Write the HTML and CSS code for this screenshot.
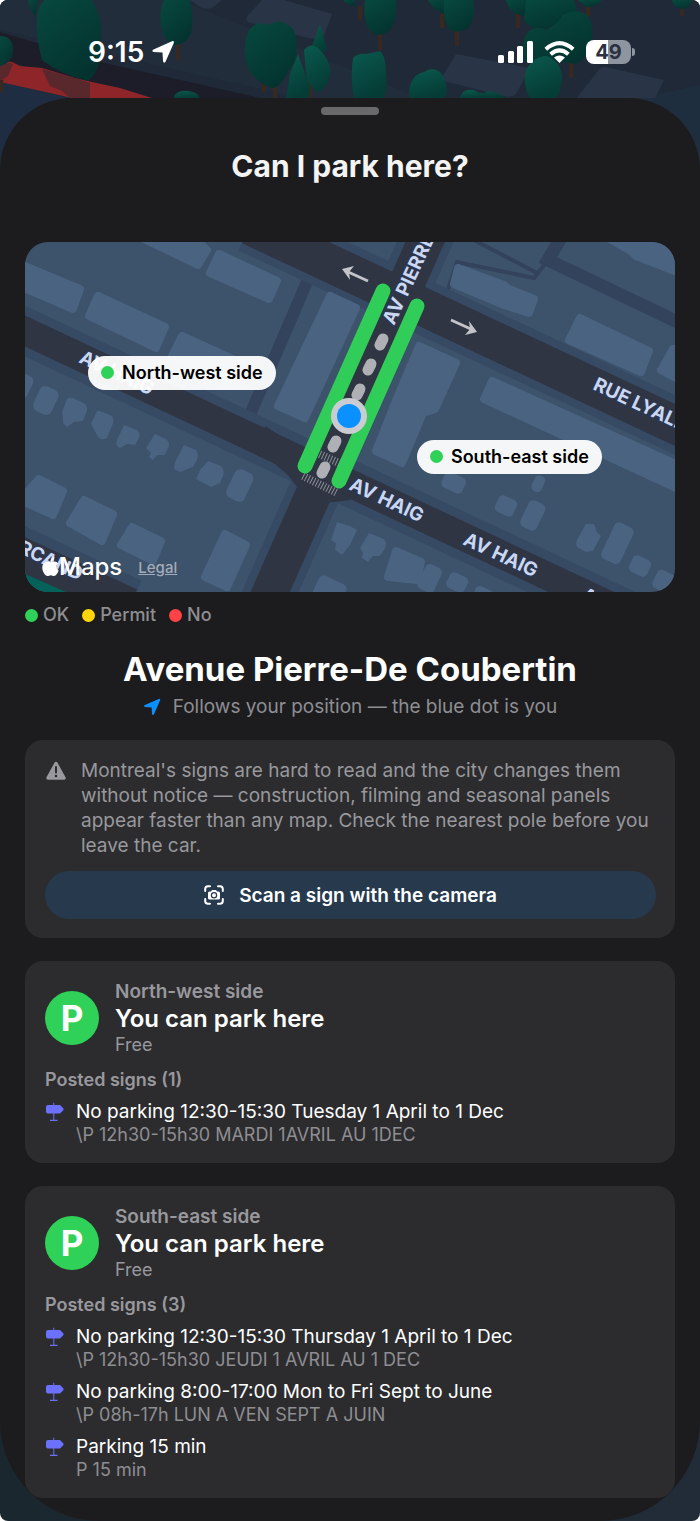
FILE: index.html
```html
<!DOCTYPE html>
<html lang="en">
<head>
    <meta charset="UTF-8">
    <meta name="viewport" content="width=device-width, initial-scale=1.0">
    <title>Can I park here?</title>
    <link rel="stylesheet" href="styles.css">
</head>
<body>

    <div class="screen">
        <!-- 3D city behind the sheet -->
        <svg class="scene" viewBox="0 0 700 180" preserveAspectRatio="xMidYMin slice" aria-hidden="true">
            <defs>
                <linearGradient id="leaf" x1="0" y1="0" x2="0.6" y2="1">
                    <stop offset="0" stop-color="#07493f"/>
                    <stop offset="1" stop-color="#04332f"/>
                </linearGradient>
                <linearGradient id="leafLight" x1="0" y1="0" x2="0.4" y2="1">
                    <stop offset="0" stop-color="#0a5a4d"/>
                    <stop offset="1" stop-color="#053c36"/>
                </linearGradient>
            </defs>
            <rect width="700" height="180" fill="#1f2937"/>
            <path d="M0 0H180L420 98H300L0 30Z" fill="#222d3b"/>
            <path d="M0 32L100 62L260 98H150L0 60Z" fill="#1c1d29"/>
            <path d="M0 82L70 98H60V180H0Z" fill="#1e2d42"/>
            <path d="M640 98L700 85V180H640Z" fill="#1f2e3e"/>
            <g fill="#293547">
                <path d="M262 0H284L332 14L324 36Q318 40 308 38L248 22Q244 18 250 13Z"/>
                <path d="M456 54L530 68L516 94Q512 98 504 96L440 80Z"/>
                <path d="M600 68Q604 66 610 68L664 80L655 98H577Z"/>
                <path d="M190 0H222L212 8Q206 10 200 7Z"/>
            </g>
            <path d="M0 60L12 62L20 66L42 68L75 78L92 82L120 88L152 98H72L50 93L0 82Z" fill="#8e2528"/>
            <path d="M0 60L13 64L8 76L0 81ZM42 69L75 78L90 83L90 98H70L62 91L50 86Z" fill="#58282d"/>
            <path d="M178 44V60M264 84V92M275 84V98M310 84V98M1 80V92M360 6V20M380 34V50M442 14V28M457 30V46M518 14V28M571 62V78M588 4V16M682 8V16" stroke="#38281f" stroke-width="4"/>
            <g fill="url(#leaf)">
                <path d="M38 10Q42 0 50 -4H88Q103 12 101 40Q103 68 88 81Q60 74 42 60Q34 30 38 10Z"/>
                <path d="M28 0H38L35 16Q29 10 28 0Z"/>
                <path d="M0 36Q13 36 13 50Q13 62 0 66Z"/>
                <path d="M164 0H190Q194 18 191 34Q184 46 174 45Q164 42 161 26Q159 10 164 0Z"/>
                <path d="M249 30Q256 20 268 25Q280 18 288 25Q298 30 296 46Q298 60 288 72Q280 88 272 88Q262 86 250 72Q240 52 249 30Z"/>
                <path d="M343 0H355V6Q348 6 343 0Z"/>
                <path d="M365 0H396Q398 20 390 30Q380 38 372 33Q362 22 365 0Z"/>
                <path d="M428 0H446V14Q434 12 428 0Z"/>
                <path d="M444 0H473Q476 18 468 28Q458 34 450 30Q442 20 444 0Z"/>
                <path d="M506 0H526V16Q510 16 506 0Z"/>
                <path d="M526 0H574L578 12Q562 28 548 28Q532 32 524 20Z"/>
                <path d="M578 0H602Q596 8 586 7Z"/>
                <path d="M672 0H692Q690 9 682 9Q674 8 672 0Z"/>
                <path d="M522 62Q520 40 530 30Q540 26 546 30Q558 24 562 16Q574 8 586 14Q594 22 592 40Q590 56 576 64Q550 60 522 62Z"/>
            </g>
            <g fill="url(#leafLight)">
                <path d="M174 96Q178 90 188 91Q198 92 200 98H174Z"/>
                <path d="M320 24L326 45Q330 50 322 52L312 46Z"/>
                <path d="M353 58Q358 53 366 54L380 51Q386 56 386 72Q388 88 384 98H354Q350 78 353 58Z"/>
                <path d="M409 90Q412 74 424 72Q432 66 440 72Q448 82 447 94L444 98H410Z"/>
                <path d="M460 98Q462 88 474 90Q480 94 484 93Q492 88 506 98Z"/>
                <path d="M526 70Q534 56 546 56Q560 60 562 76Q562 92 556 98H530Q522 86 526 70Z"/>
                <path d="M298 54L310 88L309 98H286L290 74Z"/>
                <path d="M304 50Q310 42 318 48Q328 56 331 72Q326 90 318 92Q306 84 306 72Z"/>
            </g>
        </svg>

        <header class="status-bar">
            <div class="status-left">
                <span class="clock">9:15</span>
                <svg width="24" height="24" viewBox="0 0 24 24" aria-hidden="true"><path d="M21 1.200Q23.600 .4 22.800 3L14.600 21.500Q13 24 12 21.200L11.500 12.600L2.800 12Q0 11 2.500 9.400Z" fill="#fff"/></svg>
            </div>
            <div class="status-right">
                <svg width="35" height="23" viewBox="0 0 35 23" fill="#fff" aria-hidden="true">
                    <rect x="0" y="14" width="6" height="8" rx="1.500"/>
                    <rect x="10" y="10" width="6" height="12" rx="1.500"/>
                    <rect x="19" y="5" width="6" height="17" rx="1.500"/>
                    <rect x="29" y="0" width="6" height="22" rx="1.500"/>
                </svg>
                <svg width="31" height="23" viewBox="0 0 31 23" aria-hidden="true">
                    <path d="M1.800 8.200Q15.500 -4 29.200 8.200M6.600 13.300Q15.500 5.600 24.400 13.300" fill="none" stroke="#fff" stroke-width="4"/>
                    <path d="M10 16.500Q15.500 12.500 21 16.500L15.500 22Z" fill="#fff"/>
                </svg>
                <div class="battery"><span class="battery-level">49</span></div>
            </div>
        </header>

        <main class="sheet">
            <div class="grabber"></div>
            <h1>Can I park here?</h1>

            <div class="map">
                <svg class="map-art" viewBox="25 242 650 350" preserveAspectRatio="xMidYMid slice" role="img" aria-label="Map of Avenue Pierre-De Coubertin">
                    <rect x="25" y="242" width="650" height="350" fill="#3d526b"/>

                    <!-- alleys -->
                    <g fill="none" stroke="#33435c">
                        <path d="M312 270L250 415" stroke-width="12"/>
                        <path d="M562 236L548 260L690 328" stroke-width="13"/>
                        <path d="M446 296L457 262L534 278L548 260M470 238L537 273" stroke-width="4"/>
                    </g>

                    <!-- kerbs -->
                    <g fill="none" stroke="#364a64">
                        <path d="M10 324L690 643" stroke-width="46"/>
                        <path d="M250 226L690 432" stroke-width="54"/>
                        <path d="M434 222L256 624" stroke-width="52"/>
                        <path d="M10 549L130 605" stroke-width="54"/>
                    </g>

                    <!-- roads -->
                    <g fill="none" stroke="#2f3542">
                        <path d="M10 324L690 643" stroke-width="28"/>
                        <path d="M250 226L690 432" stroke-width="38"/>
                        <path d="M434 222L256 624" stroke-width="36"/>
                        <path d="M10 549L130 605" stroke-width="34"/>
                    </g>
                    <path d="M265 426L305 452L345 462L350 500L310 505L288 475L258 450Z" fill="#2f3542"/>
                    <path d="M25 574L66 592H25Z" fill="#03625a"/>

                    <!-- buildings -->
                    <g fill="#496380" stroke="#496380" stroke-width="8" stroke-linejoin="round">
                        <path d="M15 262L80 289L73 309L15 284Z"/>
                        <path d="M142 238L185 228L207 250L198 265Z"/>
                        <path d="M219 254L277 281L269 299L210 273Z"/>
                        <path d="M98 296L165 327L156 348L89 316Z"/>
                        <path d="M182 336L241 363L232 382L172 356Z"/>
                        <path d="M330 296L356 308L305 418L278 406Z"/>
                        <path d="M419 346L456 363L435 409L423 413L402 463L376 451L397 398Z"/>
                        <path d="M458 268L504 285L509 289L534 299L529 313L504 305L454 284Z"/>
                        <path d="M580 318L649 351L641 372L569 340Z"/>
                        <path d="M673 349L661 370L680 380V349Z"/>
                        <path d="M608 238L631 251L636 256L685 275V238Z"/>
                        <path d="M492 381L680 466V490L484 399Z"/>
                        <path d="M39 479L63 491L53 515L20 500Z"/>
                        <path d="M84 500L113 514L102 541L70 523Z"/>
                        <path d="M132 527L161 541L153 561L121 545Z"/>
                        <path d="M225 534L246 545L227 587L205 577Z"/>
                        <path d="M396 551L421 562L417 580L388 577Z"/>
                    </g>
                    <g fill="#496380">
                        <rect x="15" y="374" width="16" height="24" rx="6" transform="rotate(25 23 386)"/>
                        <rect x="36" y="387" width="20" height="27" rx="6" transform="rotate(25 46 400)"/>
                        <path d="M67 399Q70 396 75 399L85 404Q89 408 86 413L83 421L74 422L67 427L63 423V416L62 412Z"/>
                        <path d="M97 411Q102 411 112 416Q115 420 112 426L107 438Q102 441 98 437L91 424Z"/>
                        <path d="M124 425L137 430Q141 434 139 438L135 445L127 444L120 448Q115 446 117 440Z"/>
                        <path d="M155 434L166 439Q171 443 168 448L165 455L157 455L153 460L149 457L151 453L146 448Z"/>
                        <path d="M184 445L196 450Q199 455 197 460L193 467L180 472L174 469L175 462Z"/>
                        <path d="M208 461L221 466Q225 470 223 476L220 483L211 487L196 479L200 470Z"/>
                        <rect x="230" y="470" width="20" height="31" rx="6" transform="rotate(25 240 485)"/>
                        <rect x="442" y="474" width="23" height="17" rx="5" transform="rotate(25 453 483)"/>
                        <rect x="533" y="475" width="11" height="17" rx="5" transform="rotate(25 538 483)"/>
                        <rect x="496" y="497" width="20" height="18" rx="5" transform="rotate(25 506 506)"/>
                        <rect x="524" y="501" width="18" height="29" rx="5" transform="rotate(25 533 515)"/>
                        <path d="M586 524L594 524L597 532L601 536L593 551L586 552L577 547Q575 543 578 538Z"/>
                        <rect x="607" y="523" width="21" height="40" rx="5" transform="rotate(25 617 543)"/>
                        <rect x="630" y="557" width="20" height="18" rx="5" transform="rotate(25 640 566)"/>
                        <rect x="654" y="571" width="20" height="20" rx="5" transform="rotate(25 663 581)"/>
                        <path d="M337 522L350 526L357 530L350 545L342 555L335 550L336 543L331 540Z"/>
                        <path d="M369 533L384 539Q388 544 384 550L380 556L373 556L368 562L362 558L363 553L360 548Z"/>
                        <rect x="421" y="565" width="18" height="27" rx="5" transform="rotate(25 430 578)"/>
                        <rect x="447" y="574" width="20" height="17" rx="5" transform="rotate(25 457 583)"/>
                        <rect x="474" y="588" width="20" height="14" rx="5" transform="rotate(25 484 594)"/>
                        <rect x="315" y="579" width="30" height="24" rx="5" transform="rotate(25 330 590)"/>
                    </g>

                    <!-- crosswalks and one-way arrows -->
                    <g fill="none" stroke="#8c9099" stroke-width="8" stroke-dasharray="1 2">
                        <path d="M317 453L341 464"/>
                        <path d="M303 476L337 493"/>
                    </g>
                    <path d="M368 281L346 271M451 320L473 330" fill="none" stroke="#c2c4ca" stroke-width="3"/>
                    <path d="M342 269L354 266L349 272L350 280ZM477 332L465 335L470 329L469 321Z" fill="#c2c4ca"/>

                    <g class="road-label">
                        <text transform="translate(394 326) rotate(-65)">AV PIERRE</text>
                        <text transform="translate(592 389) rotate(25)">RUE LYALL</text>
                        <text transform="translate(348 489) rotate(25)">AV HAIG</text>
                        <text transform="translate(462 544) rotate(25)">AV HAIG</text>
                        <text transform="translate(580 599) rotate(25)">AV HAIG</text>
                        <text transform="translate(78 362) rotate(25)">AV HAIG</text>
                        <text transform="translate(17 552) rotate(25)">RCAND</text>
                    </g>

                    <!-- lane marks -->
                    <g stroke="#aeb0b5" stroke-width="11" stroke-linecap="round">
                        <path d="M383 339L380 345M371 364L368 370M360 389L357 395M336 441L333 447M325 467L322 473"/>
                    </g>

                    <!-- both sides of the street -->
                    <g stroke="#30cd58" stroke-width="15" stroke-linecap="round">
                        <path d="M383 291L305 466"/>
                        <path d="M417 306L339 481"/>
                    </g>

                    <circle cx="349" cy="416" r="18" fill="#cbccd1"/>
                    <circle cx="349" cy="416" r="12" fill="#0a91ff"/>
                </svg>

                <span class="pill pill-nw"><i class="dot ok"></i>North-west side</span>
                <span class="pill pill-se"><i class="dot ok"></i>South-east side</span>

                <div class="map-credit">
                    <span class="maps-logo">
                        <svg width="17" height="20" viewBox="0 0 17 20" fill="#fff" aria-hidden="true">
                            <path d="M8.600 5.600C9.700 5.600 10.800 4.600 12.700 4.600C14 4.600 15.300 5.300 16.100 6.400C13.400 8.200 13.700 12.300 16.700 13.500C15.900 15.800 14 19 12.100 19C10.800 19 10.300 18.200 8.800 18.200C7.300 18.200 6.700 19 5.500 19C3.200 19 .3 14.500 .3 10.700C.3 6.900 2.600 4.700 5 4.700C6.500 4.700 7.700 5.600 8.600 5.600ZM8.500 4.600C8.300 2.300 10.200 .3 12.200 0C12.500 2.500 10.400 4.600 8.500 4.600Z"/>
                        </svg>Maps
                    </span>
                    <a class="legal" href="#">Legal</a>
                </div>
            </div>

            <div class="legend">
                <span><i class="dot ok"></i>OK</span>
                <span><i class="dot permit"></i>Permit</span>
                <span><i class="dot no"></i>No</span>
            </div>

            <h2>Avenue Pierre-De Coubertin</h2>
            <p class="follows">
                <svg width="18" height="18" viewBox="0 0 24 24" aria-hidden="true"><path d="M21 1.200Q23.600 .4 22.800 3L14.600 21.500Q13 24 12 21.200L11.500 12.600L2.800 12Q0 11 2.500 9.400Z" fill="#0a91ff"/></svg>
                Follows your position — the blue dot is you
            </p>

            <section class="card">
                <div class="warning">
                    <svg width="22" height="20" viewBox="0 0 22 20" aria-hidden="true">
                        <path d="M11 2.500L19 17H3Z" fill="#98989d" stroke="#98989d" stroke-width="3.500" stroke-linejoin="round"/>
                        <path d="M11 6V11.500" stroke="#2c2c2e" stroke-width="2" stroke-linecap="round"/>
                        <circle cx="11" cy="15" r="1.300" fill="#2c2c2e"/>
                    </svg>
                    <p>Montreal's signs are hard to read and the city changes them without notice — construction, filming and seasonal panels appear faster than any map. Check the nearest pole before you leave the car.</p>
                </div>
                <button class="scan-btn" type="button">
                    <svg width="20" height="20" viewBox="0 0 20 20" aria-hidden="true">
                        <path d="M1.200 6V4Q1.200 1.200 4 1.200H6M14 1.200H16Q18.800 1.200 18.800 4V6M18.800 14V16Q18.800 18.800 16 18.800H14M6 18.800H4Q1.200 18.800 1.200 16V14" fill="none" stroke="#fff" stroke-width="2" stroke-linecap="round"/>
                        <path d="M5.500 6.500H7L8 5H12L13 6.500H14.500Q16 6.500 16 8V13Q16 14.500 14.500 14.500H5.500Q4 14.500 4 13V8Q4 6.500 5.500 6.500Z" fill="#fff"/>
                        <circle cx="10" cy="10.300" r="2.600" fill="#fff" stroke="#26394d" stroke-width="1.200"/>
                    </svg>
                    Scan a sign with the camera
                </button>
            </section>

            <section class="card">
                <div class="side">
                    <div class="badge">P</div>
                    <div>
                        <div class="side-name">North-west side</div>
                        <h3>You can park here</h3>
                        <div class="price">Free</div>
                    </div>
                </div>
                <h4>Posted signs (1)</h4>
                <ul class="signs">
                    <li>
                        <svg width="20" height="20" viewBox="0 0 20 20" fill="#6c71fb" aria-hidden="true"><path d="M8.300 1Q8.800 0 9.300 1V3H15L18.500 6.500V8L15 11.500H9.300V17.800H12.500V19H5V17.800H8.300V11.500H3Q1 11.500 1 9.500V5Q1 3 3 3H8.300Z"/></svg>
                        <div>
                            <div class="sign-text">No parking 12:30-15:30 Tuesday 1 April to 1 Dec</div>
                            <div class="sign-raw">\P 12h30-15h30 MARDI 1AVRIL AU 1DEC</div>
                        </div>
                    </li>
                </ul>
            </section>

            <section class="card">
                <div class="side">
                    <div class="badge">P</div>
                    <div>
                        <div class="side-name">South-east side</div>
                        <h3>You can park here</h3>
                        <div class="price">Free</div>
                    </div>
                </div>
                <h4>Posted signs (3)</h4>
                <ul class="signs">
                    <li>
                        <svg width="20" height="20" viewBox="0 0 20 20" fill="#6c71fb" aria-hidden="true"><path d="M8.300 1Q8.800 0 9.300 1V3H15L18.500 6.500V8L15 11.500H9.300V17.800H12.500V19H5V17.800H8.300V11.500H3Q1 11.500 1 9.500V5Q1 3 3 3H8.300Z"/></svg>
                        <div>
                            <div class="sign-text">No parking 12:30-15:30 Thursday 1 April to 1 Dec</div>
                            <div class="sign-raw">\P 12h30-15h30 JEUDI 1 AVRIL AU 1 DEC</div>
                        </div>
                    </li>
                    <li>
                        <svg width="20" height="20" viewBox="0 0 20 20" fill="#6c71fb" aria-hidden="true"><path d="M8.300 1Q8.800 0 9.300 1V3H15L18.500 6.500V8L15 11.500H9.300V17.800H12.500V19H5V17.800H8.300V11.500H3Q1 11.500 1 9.500V5Q1 3 3 3H8.300Z"/></svg>
                        <div>
                            <div class="sign-text">No parking 8:00-17:00 Mon to Fri Sept to June</div>
                            <div class="sign-raw">\P 08h-17h LUN A VEN SEPT A JUIN</div>
                        </div>
                    </li>
                    <li>
                        <svg width="20" height="20" viewBox="0 0 20 20" fill="#6c71fb" aria-hidden="true"><path d="M8.300 1Q8.800 0 9.300 1V3H15L18.500 6.500V8L15 11.500H9.300V17.800H12.500V19H5V17.800H8.300V11.500H3Q1 11.500 1 9.500V5Q1 3 3 3H8.300Z"/></svg>
                        <div>
                            <div class="sign-text">Parking 15 min</div>
                            <div class="sign-raw">P 15 min</div>
                        </div>
                    </li>
                </ul>
            </section>
        </main>
    </div>

</body>
</html>
```
FILE: styles.css
```css
* {
    box-sizing: border-box;
}

body {
    font-family: Inter, "Liberation Sans", sans-serif;
    background-color: #fff;
    color: #fff;
    margin: 0;
}

h1, h2, h3, h4, p, ul {
    margin: 0;
    padding: 0;
}

svg {
    display: block;
    flex-shrink: 0;
}

.screen {
    position: relative;
    overflow: hidden;
    border-radius: 8px;
    background: linear-gradient(90deg, #1a272e, #222c38);
}

.scene {
    position: absolute;
    top: 0;
    left: 0;
    width: 100%;
    height: 180px;
}

/* status bar */
.status-bar {
    position: relative;
    display: flex;
    justify-content: space-between;
    height: 98px;
    padding: 36px 65px 30px 88px;
}

.status-left,
.status-right {
    display: flex;
    align-items: center;
    gap: 7px;
}

.status-right {
    gap: 11px;
}

.clock {
    font-size: 28px;
    font-weight: 600;
}

.battery {
    position: relative;
    width: 45px;
    height: 24px;
    margin-right: 4px;
    border-radius: 8px;
    background: linear-gradient(90deg, #fff 49%, #8f959e 49%);
    color: #2a3240;
    font-size: 20px;
    font-weight: 700;
    line-height: 24px;
    text-align: center;
}

.battery::after {
    content: "";
    position: absolute;
    top: 8px;
    right: -4px;
    width: 3px;
    height: 8px;
    border-radius: 0 3px 3px 0;
    background-color: #8f959e;
}

/* sheet */
.sheet {
    position: relative;
    overflow: hidden;
    padding: 9px 25px 23px;
    border-radius: 72px 72px 100px 100px;
    background-color: #1c1c1e;
}

.grabber {
    width: 58px;
    height: 8px;
    margin: 0 auto;
    border-radius: 4px;
    background-color: #69696c;
}

h1 {
    margin-top: 31px;
    color: #f4f4f5;
    font-size: 30px;
    font-weight: 700;
    line-height: 40px;
    text-align: center;
}

/* map */
.map {
    position: relative;
    overflow: hidden;
    margin-top: 56px;
    border-radius: 23px;
}

.map-art {
    width: 100%;
    aspect-ratio: 650 / 350;
}

.road-label {
    fill: #cbd7f0;
    stroke: #2b3750;
    stroke-width: 3px;
    paint-order: stroke;
    font-size: 19px;
    font-weight: 700;
}

.dot {
    width: 13px;
    height: 13px;
    border-radius: 50%;
}

.ok {
    background-color: #30d158;
}

.permit {
    background-color: #ffd60a;
}

.no {
    background-color: #ff4245;
}

.pill {
    position: absolute;
    display: flex;
    align-items: center;
    gap: 8px;
    height: 34px;
    padding: 0 13px;
    border-radius: 17px;
    background-color: rgba(255, 255, 255, 0.95);
    color: #000;
    font-size: 18px;
    font-weight: 600;
    white-space: nowrap;
}

.pill-nw {
    left: 9.7%;
    top: 32.5%;
}

.pill-se {
    left: 60.3%;
    top: 56.5%;
}

.map-credit {
    position: absolute;
    left: 17px;
    bottom: 11px;
    display: flex;
    align-items: center;
    gap: 16px;
}

.maps-logo {
    display: flex;
    align-items: center;
    font-size: 24px;
    font-weight: 500;
    line-height: 28px;
}

.legal {
    color: #a3acb8;
    font-size: 15px;
    font-weight: 500;
}

.legend {
    display: flex;
    gap: 13px;
    margin-top: 11px;
    color: #8e8e93;
    font-size: 18px;
    font-weight: 500;
    line-height: 24px;
}

.legend span {
    display: flex;
    align-items: center;
    gap: 5px;
}

h2 {
    margin-top: 21px;
    font-size: 33px;
    font-weight: 700;
    line-height: 42px;
    text-align: center;
}

.follows {
    display: flex;
    align-items: center;
    justify-content: center;
    gap: 12px;
    margin-top: 4px;
    color: #8e8e93;
    font-size: 19px;
    line-height: 26px;
}

/* cards */
.card {
    margin-top: 23px;
    padding: 19px 19px 17px 20px;
    border-radius: 18px;
    background-color: #2c2c2e;
}

.follows + .card {
    margin-top: 20px;
    padding: 18px 19px 19px 20px;
}

.warning {
    display: flex;
    gap: 14px;
    color: #98989d;
    font-size: 19px;
    line-height: 25px;
}

.warning svg {
    margin-top: 3px;
}

.scan-btn {
    display: flex;
    align-items: center;
    justify-content: center;
    gap: 15px;
    width: 100%;
    height: 48px;
    margin-top: 13px;
    border: none;
    border-radius: 24px;
    background-color: #26394d;
    color: #fff;
    font-family: inherit;
    font-size: 19px;
    font-weight: 600;
    cursor: pointer;
}

.side {
    display: flex;
    align-items: center;
    gap: 16px;
}

.badge {
    width: 54px;
    height: 54px;
    border-radius: 50%;
    background-color: #30d158;
    font-size: 35px;
    font-weight: 700;
    line-height: 54px;
    text-align: center;
}

.side-name {
    color: #98989d;
    font-size: 19px;
    font-weight: 600;
    line-height: 24px;
}

h3 {
    font-size: 24px;
    font-weight: 600;
    line-height: 30px;
}

.price {
    color: #98989d;
    font-size: 18px;
    line-height: 22px;
}

h4 {
    margin-top: 12px;
    color: #98989d;
    font-size: 18px;
    font-weight: 600;
    line-height: 24px;
}

.signs {
    display: grid;
    gap: 8px;
    margin-top: 7px;
    list-style: none;
}

.signs li {
    display: flex;
    gap: 11px;
}

.signs svg {
    margin-top: 3px;
}

.sign-text {
    font-size: 19px;
    line-height: 25px;
}

.sign-raw {
    color: #8e8e93;
    font-size: 18px;
    line-height: 22px;
}
```
